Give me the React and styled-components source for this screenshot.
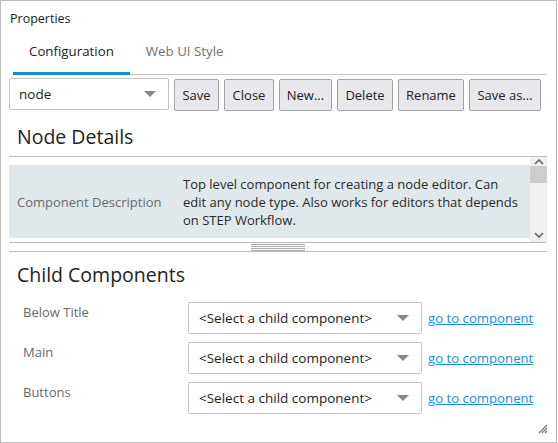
import React from "react";
import styled, { createGlobalStyle } from "styled-components";

const Global = createGlobalStyle`
  html, body { margin: 0; padding: 0; background: #fff; }
  body { font-family: "Open Sans", "Noto Sans", sans-serif; }
  * { box-sizing: border-box; }
`;

const Panel = styled.div`
  width: 557px;
  height: 443px;
  border: 1px solid #bcbcbc;
  position: relative;
  display: flex;
  flex-direction: column;
  background: #fff;
  color: #222;
`;

const Title = styled.div`
  font-size: 12.5px;
  line-height: 18px;
  padding: 9px 0 0 9px;
  height: 32px;
`;

const TabBar = styled.div`
  display: flex;
  margin: 0 9px 0 12px;
  border-bottom: 1px solid #c6c6c6;
  height: 42px;
`;

const Tab = styled.div`
  padding: 0 16px;
  font-size: 13.3px;
  display: flex;
  align-items: center;
  color: ${(p) => (p.$active ? "#222" : "#707070")};
  border-bottom: 3px solid ${(p) => (p.$active ? "#0f8ecf" : "transparent")};
  margin-bottom: -1px;
  padding-bottom: 3px;
`;

const Toolbar = styled.div`
  display: flex;
  gap: 5px;
  padding: 3px 8px 0 8px;
  align-items: flex-start;
`;

const SelectBox = styled.div`
  width: ${(p) => p.$w}px;
  height: 32px;
  border: 1px solid #c4c4c4;
  border-radius: 2px;
  background: #fff;
  display: flex;
  align-items: center;
  justify-content: space-between;
  padding: 0 12px 0 ${(p) => p.$pl || 9}px;
  font-size: 13.5px;
  color: #222;
  white-space: nowrap;
`;

const Caret = styled.span`
  width: 0;
  height: 0;
  border-left: 6px solid transparent;
  border-right: 6px solid transparent;
  border-top: 6px solid #888;
`;

const Button = styled.button`
  width: ${(p) => p.$w}px;
  height: 32px;
  margin-top: 1px;
  padding: 0;
  border: 1px solid #a3a3a3;
  border-radius: 2px;
  background: #e8e8ec;
  font-family: inherit;
  font-size: 13px;
  color: #222;
  white-space: nowrap;
  text-align: center;
`;

const Heading = styled.div`
  font-size: 19.5px;
  line-height: 26px;
  padding: 0 16px;
  margin-top: ${(p) => p.$mt}px;
  height: ${(p) => p.$h}px;
  color: #222;
`;

const Details = styled.div`
  margin: 0 9px 0 8px;
  border-top: 1px solid #c0c0c0;
  height: 86px;
  display: flex;
`;

const DetailsBody = styled.div`
  flex: 1;
  padding-top: 8px;
`;

const DetailRow = styled.div`
  display: grid;
  grid-template-columns: 174px 1fr;
  background: #e1e8eb;
  padding: 10px 0 9px 0;
  font-size: 13px;
  line-height: 18px;
`;

const DetailLabel = styled.div`
  color: #6a6a6a;
  padding-left: 8px;
  align-self: center;
`;

const DetailValue = styled.div`
  color: #2a2a2a;
  padding-right: 8px;
`;

const Scrollbar = styled.div`
  width: 17px;
  background: #f0f0f0;
  display: flex;
  flex-direction: column;
  align-items: center;
  padding-top: 2px;
`;

const Thumb = styled.div`
  width: 17px;
  height: 17px;
  background: #cdcdcd;
  margin-top: 1px;
`;

const Spacer = styled.div`
  flex: 1;
`;

const Splitter = styled.div`
  margin: 0 9px 0 8px;
  height: 10px;
  border-top: 1px solid #bdbdbd;
  border-bottom: 1px solid #bdbdbd;
  display: flex;
  justify-content: center;
  padding-top: 1px;
`;

const Grip = styled.div`
  width: 54px;
  height: 7px;
  background: repeating-linear-gradient(
    to bottom,
    #a9a9a9 0px,
    #a9a9a9 1px,
    transparent 1px,
    transparent 2px
  );
`;

const ChildRows = styled.div`
  display: flex;
  flex-direction: column;
  gap: 8px;
  padding-left: 22px;
`;

const ChildRow = styled.div`
  display: grid;
  grid-template-columns: 159px 234px auto;
  align-items: start;
  column-gap: 6px;
`;

const ChildLabel = styled.div`
  font-size: 13px;
  line-height: 20px;
  color: #6a6a6a;
`;

const ChildSelect = styled(SelectBox)`
  padding-left: 10px;
`;

const Link = styled.a`
  color: #1a8fd8;
  text-decoration: underline;
  font-size: 13.2px;
  line-height: 32px;
  white-space: nowrap;
  cursor: pointer;
`;

const ResizeGrip = styled.svg`
  position: absolute;
  right: 8px;
  bottom: 8px;
`;

const ArrowIcon = ({ up }) => (
  <svg width="10" height="6" viewBox="0 0 10 6" style={{ display: "block" }}>
    <path
      d={up ? "M1 5 L5 1 L9 5" : "M1 1 L5 5 L9 1"}
      fill="none"
      stroke="#606060"
      strokeWidth="1.5"
    />
  </svg>
);

const buttons = [
  ["Save", 45],
  ["Close", 50],
  ["New...", 53],
  ["Delete", 56],
  ["Rename", 66],
  ["Save as...", 72],
];

const children = ["Below Title", "Main", "Buttons"];

export default function App() {
  return (
    <>
      <Global />
      <Panel>
        <Title>Properties</Title>
        <TabBar>
          <Tab $active>Configuration</Tab>
          <Tab>Web UI Style</Tab>
        </TabBar>
        <Toolbar>
          <SelectBox $w={160}>
            <span>node</span>
            <Caret />
          </SelectBox>
          {buttons.map(([label, w]) => (
            <Button key={label} $w={w}>
              {label}
            </Button>
          ))}
        </Toolbar>
        <Heading $mt={13} $h={32}>Node Details</Heading>
        <Details>
          <DetailsBody>
            <DetailRow>
              <DetailLabel>Component Description</DetailLabel>
              <DetailValue>
                Top level component for creating a node editor. Can edit any
                node type. Also works for editors that depends on STEP Workflow.
              </DetailValue>
            </DetailRow>
          </DetailsBody>
          <Scrollbar>
            <ArrowIcon up />
            <Thumb />
            <Spacer />
            <ArrowIcon />
            <div style={{ height: 4 }} />
          </Scrollbar>
        </Details>
        <Splitter>
          <Grip />
        </Splitter>
        <Heading $mt={10} $h={40}>Child Components</Heading>
        <ChildRows>
          {children.map((c) => (
            <ChildRow key={c}>
              <ChildLabel>{c}</ChildLabel>
              <ChildSelect $w={234}>
                <span>&lt;Select a child component&gt;</span>
                <Caret />
              </ChildSelect>
              <Link>go to component</Link>
            </ChildRow>
          ))}
        </ChildRows>
        <ResizeGrip width="12" height="12" viewBox="0 0 12 12">
          <path d="M11 3 L3 11 M11 6 L6 11 M11 9 L9 11" stroke="#777" strokeWidth="1.2" />
        </ResizeGrip>
      </Panel>
    </>
  );
}
